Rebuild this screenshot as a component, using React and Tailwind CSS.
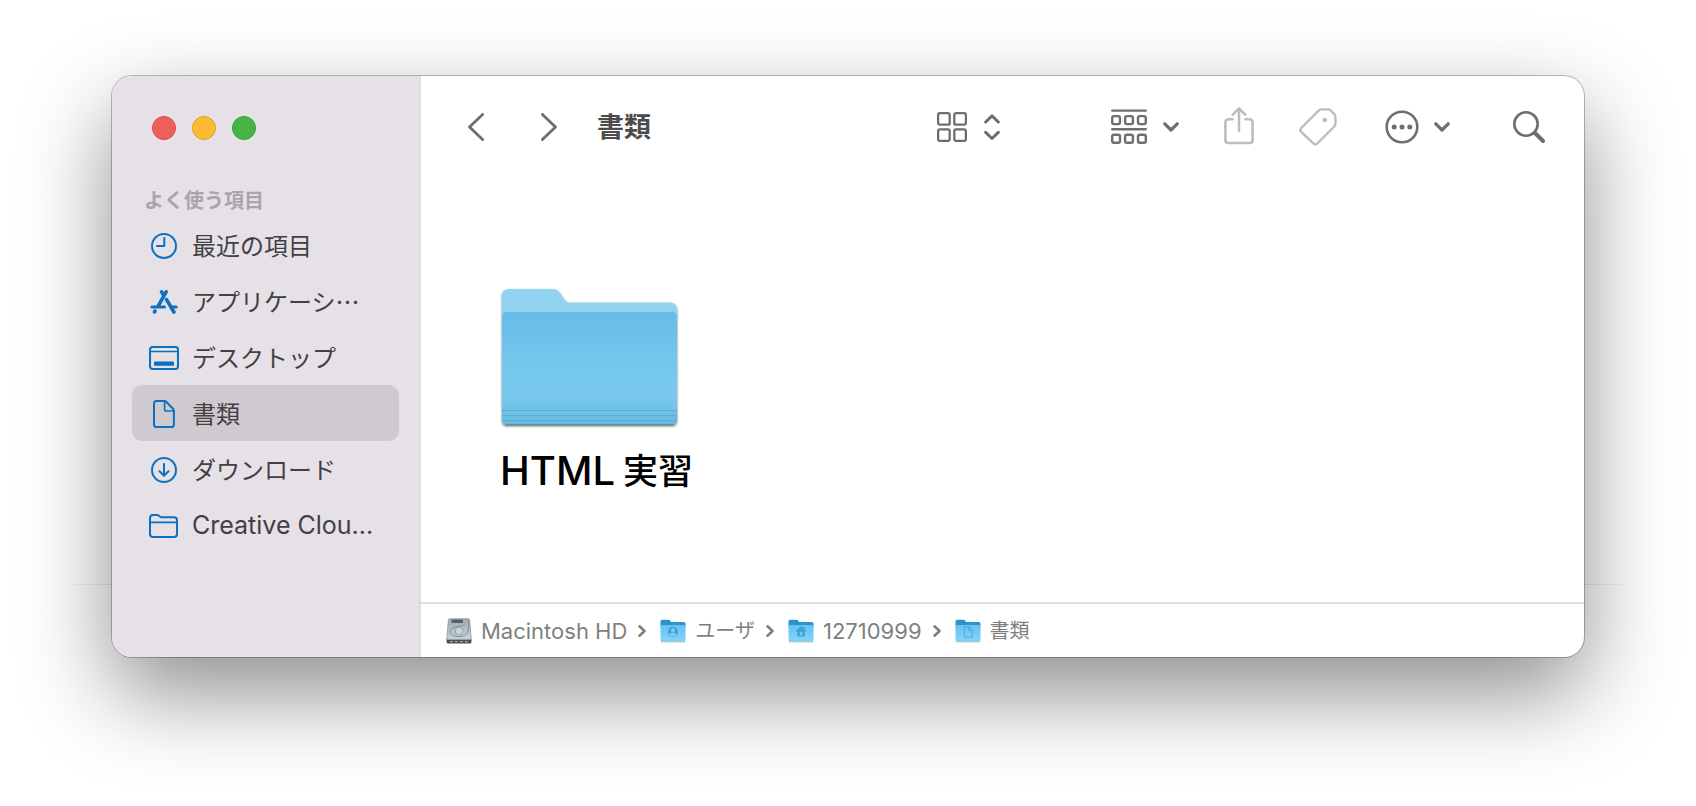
import React from "react";

const base = { fill: "none", stroke: "currentColor", strokeLinecap: "round", strokeLinejoin: "round" };

function ClockIcon() {
  return (
    <svg className="w-[26px] h-[26px]" viewBox="0 0 26 26" {...base} strokeWidth="2" aria-hidden="true">
      <circle cx="13" cy="13" r="12" />
      <path d="M13.300 5v8H6" />
    </svg>
  );
}

function AppsIcon() {
  return (
    <svg className="w-[28px] h-[24px]" viewBox="0 0 28 24" {...base} strokeWidth="3.600" aria-hidden="true">
      <path d="M16.200 1.900 8.400 15.600M11.600 1.900l1.600 2.800M16.600 9.600l7.300 12.400M5 21l-.5.900" />
      <path d="M1.900 17h12.600M22 17h4.200" strokeWidth="3" />
    </svg>
  );
}

function DesktopIcon() {
  return (
    <svg className="w-[30px] h-[24px]" viewBox="0 0 30 24" {...base} strokeWidth="2.100" aria-hidden="true">
      <rect x="1" y="1" width="28" height="22" rx="2.600" />
      <path d="M1 5.500h28" strokeWidth="1.600" />
      <rect x="5" y="15.500" width="20" height="4.300" rx="1" fill="currentColor" stroke="none" />
    </svg>
  );
}

function DocIcon() {
  return (
    <svg className="w-[22px] h-[28px]" viewBox="0 0 22 28" {...base} strokeWidth="2" aria-hidden="true">
      <path d="M3.600 1h7.600c.8 0 1.400.2 2 .8l6.800 7c.6.600.9 1.200.9 2v13.600c0 1.600-1 2.600-2.600 2.600H3.600C2 27 1 26 1 24.400V3.600C1 2 2 1 3.600 1z" />
      <path d="M11.600 1.500v7.700c0 1.200.6 1.800 1.800 1.800h7" strokeWidth="1.700" />
    </svg>
  );
}

function DownloadIcon() {
  return (
    <svg className="w-[26px] h-[26px]" viewBox="0 0 26 26" {...base} strokeWidth="2" aria-hidden="true">
      <circle cx="13" cy="13" r="12" />
      <path d="M13 7v11.500M8.500 14.300l4.500 4.400 4.500-4.400" />
    </svg>
  );
}

function FolderIcon() {
  return (
    <svg className="w-[30px] h-[24px]" viewBox="0 0 30 24" {...base} strokeWidth="2" aria-hidden="true">
      <path d="M1 20V4.200C1 2.400 2.200 1 4 1h3.600c1 0 1.700.2 2.400.8l.8.700c.6.500 1 .7 1.900.7H25c1.900 0 3 1.100 3 3V20c0 1.900-1.100 3-3 3H4c-1.900 0-3-1.100-3-3z" />
      <path d="M1 8.400h27" strokeWidth="1.600" />
    </svg>
  );
}

function ChevronDown() {
  return (
    <svg className="w-4 h-[10px]" viewBox="0 0 16 10" {...base} strokeWidth="3.200" aria-hidden="true">
      <path d="M1.800 1.800 8 8l6.200-6.200" />
    </svg>
  );
}

const favorites = [
  { label: "最近の項目", icon: <ClockIcon /> },
  { label: "アプリケーシ…", icon: <AppsIcon /> },
  { label: "デスクトップ", icon: <DesktopIcon /> },
  { label: "書類", icon: <DocIcon />, active: true },
  { label: "ダウンロード", icon: <DownloadIcon /> },
  { label: "Creative Clou...", icon: <FolderIcon />, latin: true },
];

function Sidebar() {
  return (
    <aside className="flex w-[309px] shrink-0 flex-col border-r-2 border-[#dfdbe0] bg-[#e5e1e6]">
      <div className="flex gap-4 pt-10 pl-10">
        <button type="button" aria-label="閉じる" className="size-6 rounded-full border border-[#e0443e] bg-[#ec5f5b]" />
        <button type="button" aria-label="しまう" className="size-6 rounded-full border border-[#dfa023] bg-[#f9bc30]" />
        <button type="button" aria-label="拡大" className="size-6 rounded-full border border-[#30a42d] bg-[#47b445]" />
      </div>
      <h2 className="mt-[47px] pl-8 text-xl leading-7 font-bold text-[#a9a5aa]">よく使う項目</h2>
      <nav className="mt-[2px] mb-[31px] px-5">
        <ul>
          {favorites.map((f) => (
            <li key={f.label}>
              <a
                href="#"
                aria-current={f.active ? "page" : undefined}
                className={
                  "flex h-14 items-center rounded-[10px] pt-[2px] pl-4 whitespace-nowrap text-[#424043] " +
                  (f.active ? "bg-[#cfcad0]" : "")
                }
              >
                <span className="flex w-8 shrink-0 justify-center text-[#0f70c0]">{f.icon}</span>
                <span
                  className={
                    "pl-3 " + (f.latin ? "text-[25px]" : "pb-[2px] font-['Noto_Sans_CJK_JP',sans-serif] text-2xl")
                  }
                >
                  {f.label}
                </span>
              </a>
            </li>
          ))}
        </ul>
      </nav>
      <div className="mt-auto h-[73px] border-t border-[#eae7eb]" />
    </aside>
  );
}

function Toolbar() {
  return (
    <header className="flex h-[102px] shrink-0 items-center pr-[39px] pl-[47px] text-[#6e6e6e]">
      <button type="button" aria-label="戻る">
        <svg className="w-4 h-7" viewBox="0 0 16 28" {...base} strokeWidth="2.800">
          <path d="M14.600 1.400 1.500 14l13.100 12.600" />
        </svg>
      </button>
      <button type="button" aria-label="進む" className="ml-[57px]">
        <svg className="w-4 h-7" viewBox="0 0 16 28" {...base} strokeWidth="2.800">
          <path d="M1.400 1.400 14.500 14 1.400 26.600" />
        </svg>
      </button>
      <h1 className="ml-10 pt-[2px] text-[27px] leading-9 font-bold whitespace-nowrap text-[#4b4b4b]">書類</h1>

      <button type="button" aria-label="表示方法" className="ml-auto flex items-center gap-[17px]">
        <svg className="size-[30px]" viewBox="0 0 30 30" {...base} strokeWidth="2.300">
          <rect x="1.100" y="1.100" width="11.600" height="11.600" rx="1.800" />
          <rect x="17.300" y="1.100" width="11.600" height="11.600" rx="1.800" />
          <rect x="1.100" y="17.300" width="11.600" height="11.600" rx="1.800" />
          <rect x="17.300" y="17.300" width="11.600" height="11.600" rx="1.800" />
        </svg>
        <svg className="w-4 h-[26px]" viewBox="0 0 16 26" {...base} strokeWidth="3">
          <path d="M1.700 8 8 1.900 14.300 8M1.700 18.400 8 24.500l6.300-6.100" />
        </svg>
      </button>
      <button type="button" aria-label="グループ分け" className="ml-[111px] flex items-center gap-4">
        <svg className="size-9" viewBox="0 0 36 36" {...base} strokeWidth="2.400">
          <path d="M1.200 1.600h33.600M1.200 20.300h33.600" />
          <rect x="1.200" y="7.100" width="7.800" height="8" rx="1.800" />
          <rect x="14.100" y="7.100" width="7.800" height="8" rx="1.800" />
          <rect x="27" y="7.100" width="7.800" height="8" rx="1.800" />
          <rect x="1.200" y="25.800" width="7.800" height="8" rx="1.800" />
          <rect x="14.100" y="25.800" width="7.800" height="8" rx="1.800" />
          <rect x="27" y="25.800" width="7.800" height="8" rx="1.800" />
        </svg>
        <ChevronDown />
      </button>
      <button type="button" aria-label="共有" className="ml-[45px] text-[#bdbdbd]">
        <svg className="w-[30px] h-[40px]" viewBox="0 0 30 40" {...base} strokeWidth="2.600">
          <path d="M8.600 12.300H4.600c-2 0-3.200 1.200-3.200 3.200v17.300c0 2 1.200 3.200 3.200 3.200h20.800c2 0 3.200-1.200 3.200-3.200V15.500c0-2-1.200-3.200-3.200-3.200h-4" />
          <path d="M15 23.800V1.700M8.800 7.700 15 1.500l6.200 6.200" strokeWidth="2.500" />
        </svg>
      </button>
      <button type="button" aria-label="タグ" className="ml-[45px] text-[#bdbdbd]">
        <svg className="size-[38px]" viewBox="0 0 38 38" {...base} strokeWidth="2.400">
          <path d="M19.600 2.600c.9-.9 1.800-1.200 3-1.200h6.500c1.100 0 1.900.3 2.700 1.100l3.500 3.700c.8.800 1.100 1.600 1.100 2.700v6.700c0 1.200-.4 2.100-1.200 2.900L18.400 35.400c-1.300 1.300-2.800 1.300-4.100 0L2.200 23.800c-1.200-1.200-1.200-2.500 0-3.800z" />
          <circle cx="25.800" cy="12" r="2.300" fill="currentColor" stroke="none" />
        </svg>
      </button>
      <button type="button" aria-label="アクション" className="ml-12 flex items-center gap-[15px]">
        <svg className="size-[34px]" viewBox="0 0 34 34" {...base} strokeWidth="2.600">
          <circle cx="17" cy="17" r="15.300" />
          <g fill="currentColor" stroke="none">
            <circle cx="9.200" cy="17" r="2.500" />
            <circle cx="17" cy="17" r="2.500" />
            <circle cx="24.800" cy="17" r="2.500" />
          </g>
        </svg>
        <ChevronDown />
      </button>
      <button type="button" aria-label="検索" className="ml-[63px]">
        <svg className="size-8" viewBox="0 0 32 32" {...base}>
          <circle cx="13" cy="13" r="11.700" strokeWidth="2.600" />
          <path d="m22 22 8 8" strokeWidth="4" />
        </svg>
      </button>
    </header>
  );
}

function BigFolder() {
  return (
    <svg className="w-[185px] h-[146px]" viewBox="0 0 185 146" aria-hidden="true">
      <defs>
        <linearGradient id="front" x1="0" y1="0" x2="0" y2="1">
          <stop offset="0" stopColor="#66bde8" />
          <stop offset=".6" stopColor="#78c9ee" />
          <stop offset=".75" stopColor="#78c9ed" />
          <stop offset="1" stopColor="#66b8e0" />
        </linearGradient>
        <filter id="drop" x="-5%" y="-5%" width="110%" height="112%">
          <feDropShadow dx="0" dy="1.200" stdDeviation="1.300" floodColor="#000" floodOpacity=".6" />
        </filter>
      </defs>
      <path
        filter="url(#drop)"
        fill="#93d3f2"
        d="M4 11c0-5 3-7 8-7h42c4 0 6 1 8 4l4.500 6.500c2 2.500 3.500 3 6 3H171c5 0 8 2 8 7V135c0 3-2 5-5 5H9c-3 0-5-2-5-5z"
      />
      <path fill="url(#front)" d="M4 33c0-5 3-7 8-7H171c5 0 8 2 8 7V135c0 3-2 5-5 5H9c-3 0-5-2-5-5z" />
      <path stroke="#a4dcf5" strokeWidth=".8" d="M10 26.400h163" />
      <path stroke="#5aa9d3" strokeWidth="1" d="M4 125.500h175M4 130.500h175M4 135.500h175" opacity=".75" />
      <path stroke="#4d91b5" strokeWidth="1" d="M7 139.500h169" opacity=".8" />
    </svg>
  );
}

function DiskIcon() {
  return (
    <svg className="w-[26px] h-[26px]" viewBox="0 0 26 26" aria-hidden="true">
      <defs>
        <linearGradient id="disk" x1="0" y1="0" x2="0" y2="1">
          <stop offset="0" stopColor="#a3abb0" />
          <stop offset="1" stopColor="#c3d5de" />
        </linearGradient>
      </defs>
      <path fill="url(#disk)" stroke="#8d979c" strokeWidth=".8" d="M3.500.8h19c.6 0 1 .4 1.100 1L25.300 22H.7L2.400 1.800c.1-.6.500-1 1.100-1z" />
      <path fill="#4a4f52" d="M.6 21.800h24.800v2.400c0 .8-.4 1.200-1.200 1.200H1.800c-.8 0-1.200-.4-1.200-1.200z" />
      <path stroke="#9aa5aa" strokeWidth="1.200" strokeDasharray="3 2" d="M4 23.600h18" />
      <rect x="5.500" y="1.600" width="11.500" height="3.400" fill="#596064" />
      <path fill="none" stroke="#7b888f" strokeWidth=".9" d="M22.500 2.500c.5 10 .2 16-9.500 16-5.500 0-9-1.500-9-5C4 7.500 15 10 19 6" />
      <circle cx="13" cy="13" r="3.800" fill="#c6d6de" stroke="#8a9aa2" strokeWidth=".8" />
    </svg>
  );
}

function SmallFolder({ children }) {
  return (
    <svg className="w-[26px] h-[24px]" viewBox="0 0 26 24" aria-hidden="true">
      <defs>
        <linearGradient id="small" x1="0" y1="0" x2="0" y2="1">
          <stop offset="0" stopColor="#65c2f2" />
          <stop offset="1" stopColor="#83d4f8" />
        </linearGradient>
      </defs>
      <path fill="#2f93c6" d="M.5 2.500C.5 1.400 1.200.7 2.300.7h6.200c.7 0 1.200.2 1.600.8l.6.900c.3.400.7.600 1.300.6h11.700c1.100 0 1.800.7 1.800 1.800V8H.5z" />
      <path fill="url(#small)" d="M.5 6h25v15.200c0 .8-.5 1.300-1.300 1.300H1.800c-.8 0-1.300-.5-1.300-1.300z" />
      <path stroke="#8fb9cd" strokeWidth="1" d="M1 22.800h24" />
      {children}
    </svg>
  );
}

function PersonGlyph() {
  return (
    <g>
      <circle cx="13" cy="12.800" r="5" fill="#3fa3d8" />
      <circle cx="13" cy="11.200" r="1.900" fill="#7ed0f6" />
      <path fill="#7ed0f6" d="M9.600 16c.6-1.600 1.800-2.400 3.400-2.400s2.800.8 3.400 2.400c-1.800 1.500-5 1.500-6.800 0z" />
    </g>
  );
}

function HouseGlyph() {
  return (
    <path
      fill="#3fa3d8"
      fillRule="evenodd"
      d="M13 7.200 7.600 12l.8.900.8-.7v5.200h7.600v-5.200l.8.700.8-.9-1.900-1.700V8h-1.300v1.200zM11.800 16.200v-3h2.400v3z"
    />
  );
}

function PageGlyph() {
  return <path fill="none" stroke="#4aa8d8" strokeWidth="1" d="M9.300 7.800h4.500l3.400 3.500v6.900H9.300zM13.600 8v3.500h3.500" />;
}

const path = [
  { label: "Macintosh HD", icon: <DiskIcon />, latin: true },
  { label: "ユーザ", icon: <SmallFolder><PersonGlyph /></SmallFolder> },
  { label: "12710999", icon: <SmallFolder><HouseGlyph /></SmallFolder>, latin: true },
  { label: "書類", icon: <SmallFolder><PageGlyph /></SmallFolder> },
];

function PathBar() {
  return (
    <footer className="border-t-2 border-[#e0e0e0] text-[#7f7f7f]">
      <ol className="flex h-[53px] items-center pl-[25px]">
        {path.map((p, i) => (
          <li key={p.label} className="flex items-center whitespace-nowrap">
            {i > 0 && (
              <svg className="mr-[14px] ml-[11px] w-2 h-3" viewBox="0 0 8 12" {...base} strokeWidth="2.600" aria-hidden="true">
                <path d="M1.500 1.300 6.500 6l-5 4.700" />
              </svg>
            )}
            {p.icon}
            <span className={"ml-[9px] leading-7 " + (p.latin ? "text-[22px]" : "text-xl")}>{p.label}</span>
          </li>
        ))}
      </ol>
    </footer>
  );
}

export default function App() {
  return (
    <div className="min-h-screen bg-white px-28 pt-[76px] pb-[148px] font-['Inter','Noto_Sans_CJK_JP',sans-serif]">
      <div className="relative">
        <div className="flex overflow-hidden rounded-[20px] bg-white shadow-[0_0_0_1px_rgba(0,0,0,0.25),0_36px_90px_rgba(0,0,0,0.45)]">
          <Sidebar />
          <main className="flex min-w-0 flex-1 flex-col">
            <Toolbar />
            <section className="flex-1 px-[77px] pt-[107px]">
              <figure className="flex w-max flex-col items-start">
                <BigFolder />
                <figcaption className="mt-[10px] flex items-center gap-2 pl-[2px] leading-[60px] font-medium text-black">
                  <span className="text-[40px]">HTML</span>
                  <span className="text-[35px]">実習</span>
                </figcaption>
              </figure>
            </section>
            <PathBar />
          </main>
        </div>
        <div className="absolute right-full bottom-[72px] h-px w-14 bg-linear-to-l from-black/10 to-transparent" />
        <div className="absolute bottom-[72px] left-full h-px w-14 bg-linear-to-r from-black/10 to-transparent" />
      </div>
    </div>
  );
}
